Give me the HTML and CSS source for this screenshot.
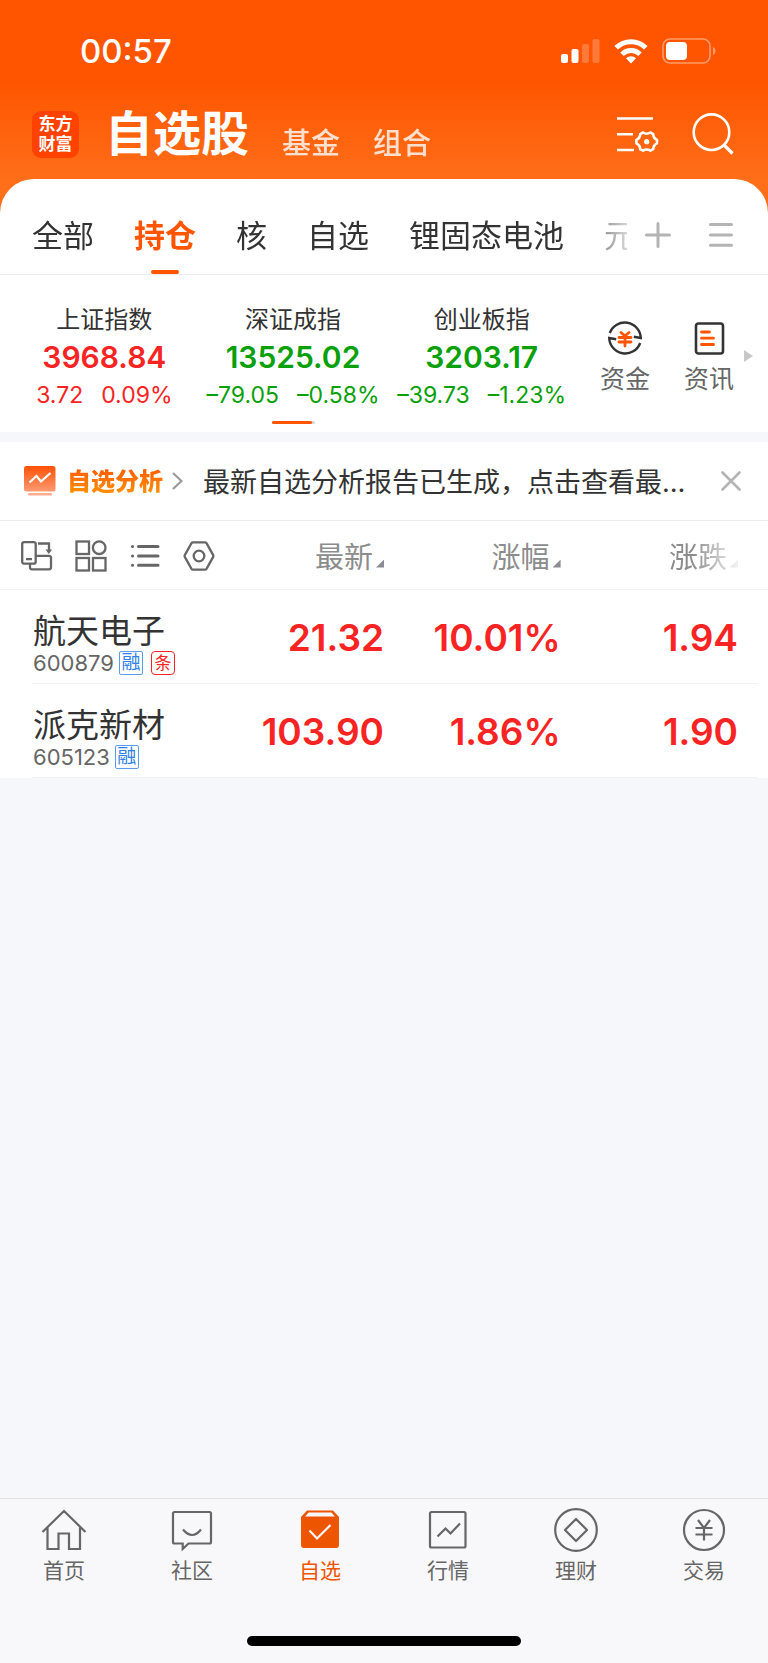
FILE: index.html
```html
<!DOCTYPE html>
<html lang="zh-CN">
<head>
<meta charset="utf-8">
<meta name="viewport" content="width=device-width, initial-scale=1">
<title>自选股</title>
<link rel="stylesheet" href="styles.css">
</head>
<body>
<div class="top">
  <div class="status">
    <time class="clock">00:57</time>
    <div class="status-icons">
      <svg width="39" height="24" viewBox="0 0 39 24" fill="#fff"><rect x="0" y="15" width="7" height="9" rx="2"/><rect x="10.500" y="10" width="7" height="14" rx="2"/><g opacity=".22"><rect x="21" y="5" width="7" height="19" rx="2"/><rect x="31.500" y="0" width="7" height="24" rx="2"/></g></svg>
      <svg width="34" height="25" viewBox="0 0 34 25" fill="none" stroke="#fff" stroke-width="5"><path d="M2.200 8.800a21 21 0 0 1 29.600 0"/><path d="M8 15.200a12.800 12.800 0 0 1 18 0"/><path d="M17 24.500l-5-5.200a7.200 7.200 0 0 1 10 0z" fill="#fff" stroke="none"/></svg>
      <svg width="54" height="26" viewBox="0 0 54 26"><rect x="1" y="1" width="47" height="24" rx="7" fill="none" stroke="#fff" stroke-opacity=".42" stroke-width="1.600"/><rect x="4" y="4" width="21" height="18" rx="4" fill="#fff"/><path d="M51 9v8c1.500-.7 2.500-2.200 2.500-4S52.500 9.700 51 9z" fill="#fff" fill-opacity=".42"/></svg>
    </div>
  </div>
  <header class="header">
    <div class="logo"><span>东方</span><span>财富</span></div>
    <nav class="sections">
      <h1 class="section-current">自选股</h1>
      <a class="section" href="#fund">基金</a>
      <a class="section" href="#combo">组合</a>
    </nav>
    <div class="header-actions">
      <button class="icon-button" aria-label="列表设置"><svg width="42" height="42" viewBox="0 0 42 42" fill="none" stroke="#fff" stroke-width="2.600"><path d="M0 5.500h36M0 21.200h16M0 37h17"/><path d="M26 19.500q3.700 2.400 7.400 0l2.800 1.600q.1 4 3.800 5.800v3.400q-3.700 1.800-3.800 5.800l-2.800 1.600q-3.700-2.400-7.400 0l-2.800-1.600q-.1-4-3.800-5.800v-3.400q3.700-1.800 3.800-5.800z" stroke-linejoin="round"/><circle cx="29.700" cy="28.700" r="2.600" fill="#fff" stroke="none"/></svg></button>
      <button class="icon-button" aria-label="搜索"><svg width="42" height="42" viewBox="0 0 42 42" fill="none" stroke="#fff" stroke-width="2.600"><circle cx="19.500" cy="19.200" r="17.800"/><path d="M31.500 31.500l9 9" stroke-width="3.200"/></svg></button>
    </div>
  </header>
  <div class="groups">
    <nav class="group-tabs">
      <a class="group" href="#all">全部</a>
      <a class="group group-active" href="#hold" aria-current="page">持仓</a>
      <a class="group" href="#core">核</a>
      <a class="group" href="#own">自选</a>
      <a class="group" href="#battery">锂固态电池</a>
      <a class="group" href="#meta">元</a>
    </nav>
    <div class="group-actions">
      <button class="icon-button" aria-label="添加分组"><svg width="26" height="26" viewBox="0 0 26 26" stroke="#b4b4b4" stroke-width="3" stroke-linecap="round"><path d="M13 1.500v23M1.500 13h23"/></svg></button>
      <button class="icon-button" aria-label="分组管理"><svg width="24" height="26" viewBox="0 0 24 26" stroke="#b4b4b4" stroke-width="3" stroke-linecap="round"><path d="M1.500 2.500h21M1.500 13h21M1.500 23.300h21"/></svg></button>
    </div>
  </div>
</div>

<section class="market">
  <div class="indices">
    <article class="index up">
      <h2 class="index-name">上证指数</h2>
      <p class="index-value">3968.84</p>
      <p class="index-change"><span>3.72</span><span>0.09%</span></p>
    </article>
    <article class="index down">
      <h2 class="index-name">深证成指</h2>
      <p class="index-value">13525.02</p>
      <p class="index-change"><span>–79.05</span><span>–0.58%</span></p>
    </article>
    <article class="index down">
      <h2 class="index-name">创业板指</h2>
      <p class="index-value">3203.17</p>
      <p class="index-change"><span>–39.73</span><span>–1.23%</span></p>
    </article>
    <div class="pager"><span></span></div>
  </div>
  <div class="shortcuts">
    <button class="shortcut"><svg width="36" height="36" viewBox="0 0 36 36" fill="none" stroke="#333" stroke-width="2.400"><path d="M2.800 13A16 16 0 0 1 33.800 18l-7-1.200"/><path d="M33.200 23A16 16 0 0 1 2.200 18l7 1.200"/><g stroke="#ff5500" stroke-width="2.800" stroke-linecap="round"><path d="M14 12.500l4 3.500 4-3.500M12 17.500h12M12 22h12M18 16.500v9.500"/></g></svg>资金</button>
    <button class="shortcut"><svg width="36" height="36" viewBox="0 0 36 36" fill="none" stroke="#333" stroke-width="2.600"><rect x="5" y="3.500" width="27" height="30" rx="2.500"/><path d="M10.500 12h8M10.500 18.200h12M10.500 24.500h12" stroke="#ff5500" stroke-width="2.800" stroke-linecap="round"/></svg>资讯</button>
    <svg class="more" width="9" height="12" viewBox="0 0 9 12" fill="#c8c8c8"><path d="M0 0l9 6-9 6z"/></svg>
  </div>
</section>

<section class="report">
  <a class="report-label" href="#analysis">
    <svg width="32" height="32" viewBox="0 0 32 32"><defs><linearGradient id="rg" x1="0" y1="0" x2="0" y2="1"><stop offset="0" stop-color="#ff5208"/><stop offset="1" stop-color="#ff9a72"/></linearGradient></defs><rect x="0" y="1" width="31.500" height="25.500" rx="2.500" fill="url(#rg)"/><rect x="4" y="28" width="24" height="2.600" rx="1" fill="#ffae8e"/><path d="M5.500 17.500l7-6.500 4.500 5.500 9.500-8.500" fill="none" stroke="#fff" stroke-width="2.200"/></svg>
    <strong>自选分析</strong>
    <svg width="11" height="18" viewBox="0 0 11 18" fill="none" stroke="#999" stroke-width="2.200"><path d="M1 1l8.500 8L1 17"/></svg>
  </a>
  <p class="report-text">最新自选分析报告已生成，点击查看最…</p>
  <button class="icon-button" aria-label="关闭"><svg width="20" height="20" viewBox="0 0 20 20" stroke="#b4b4b4" stroke-width="2.600" stroke-linecap="round"><path d="M1.500 1.500l17 17M18.500 1.500l-17 17"/></svg></button>
</section>

<main class="main">
  <table class="stocks">
    <colgroup><col class="col-name"><col class="col-price"><col class="col-rate"><col class="col-diff"></colgroup>
    <thead>
      <tr>
        <th scope="col">
          <div class="tools">
            <button class="icon-button" aria-label="横屏"><svg width="32" height="32" viewBox="0 0 32 32" fill="none" stroke="#666" stroke-width="2.300"><rect x="1.200" y="2.200" width="13.500" height="21.500" rx="2"/><path d="M5 19.200h6M15 15.800h13a2 2 0 0 1 2 2v9.500a2 2 0 0 1-2 2H11a2 2 0 0 1-2-2v-3.500M17 3.500h11v8"/><path d="M24.500 9.500h6.500l-3.200 4.500z" fill="#666" stroke="none"/></svg></button>
            <button class="icon-button" aria-label="宫格"><svg width="32" height="32" viewBox="0 0 32 32" fill="none" stroke="#666" stroke-width="2.300"><rect x="1.500" y="1.500" width="12.500" height="12.500"/><circle cx="24.200" cy="7.700" r="6.300"/><rect x="1.500" y="18" width="12.500" height="12.500"/><rect x="18" y="18" width="12.500" height="12.500"/></svg></button>
            <button class="icon-button" aria-label="列表"><svg width="32" height="32" viewBox="0 0 32 32" fill="none" stroke="#666" stroke-width="3" stroke-linecap="round"><path d="M9.500 6.500h19.500M9.500 16h19.500M9.500 25.300h19.500M3.500 6.500h.1M3.500 16h.1M3.500 25.300h.1"/></svg></button>
            <button class="icon-button" aria-label="设置"><svg width="32" height="32" viewBox="0 0 32 32" fill="none" stroke="#666" stroke-width="2.300"><path d="M10 2.400h12a1.800 1.800 0 0 1 1.500.8l6.700 11.900a2 2 0 0 1 0 1.800l-6.700 11.900a1.800 1.800 0 0 1-1.500.8H10a1.800 1.800 0 0 1-1.500-.8L1.800 16.900a2 2 0 0 1 0-1.800L8.500 3.200A1.800 1.800 0 0 1 10 2.400z"/><circle cx="16" cy="16" r="5.300"/></svg></button>
          </div>
        </th>
        <th scope="col"><button class="sort">最新</button></th>
        <th scope="col"><button class="sort">涨幅</button></th>
        <th scope="col"><button class="sort sort-faded">涨跌</button></th>
      </tr>
    </thead>
    <tbody>
      <tr>
        <td><div class="stock-name">航天电子</div><div class="stock-code">600879<span class="badge">融</span><span class="badge badge-red">条</span></div></td>
        <td>21.32</td><td>10.01%</td><td>1.94</td>
      </tr>
      <tr>
        <td><div class="stock-name">派克新材</div><div class="stock-code">605123<span class="badge">融</span></div></td>
        <td>103.90</td><td>1.86%</td><td>1.90</td>
      </tr>
    </tbody>
  </table>
</main>

<footer class="footer">
  <nav class="tabbar">
    <a class="tab" href="#home"><svg width="46" height="46" viewBox="0 0 46 46" fill="none" stroke="#666" stroke-width="2.200"><path d="M1.500 24L23 3l21.500 21M6.500 19.500V41h11V25.500h10.500V41h11V19.500"/></svg>首页</a>
    <a class="tab" href="#community"><svg width="46" height="46" viewBox="0 0 46 46" fill="none" stroke="#666" stroke-width="2.200"><path d="M5.500 4h35a1.500 1.500 0 0 1 1.500 1.500V34a1.500 1.500 0 0 1-1.500 1.500H19.500L13.700 41v-5.500H5.500A1.500 1.500 0 0 1 4 34V5.500A1.500 1.500 0 0 1 5.500 4z"/><path d="M14 21.500q9.200 11 18 0"/></svg>社区</a>
    <a class="tab tab-active" href="#watch" aria-current="page"><svg width="46" height="46" viewBox="0 0 46 46"><path d="M10 2.500h26L42 9v28a3 3 0 0 1-3 3H7a3 3 0 0 1-3-3V9z" fill="#ee5500"/><path d="M11.500 4.600h23l3.300 4H8.200z" fill="#f8f8fb"/><path d="M12.500 22.500l7.500 8L33.500 17" fill="none" stroke="#f8f8fb" stroke-width="2.200"/></svg>自选</a>
    <a class="tab" href="#quotes"><svg width="46" height="46" viewBox="0 0 46 46" fill="none" stroke="#666" stroke-width="2.200"><rect x="5" y="4" width="35.500" height="35.500" rx="1.500"/><path d="M12.500 28.500l8-8 5 5L35 15.500"/></svg>行情</a>
    <a class="tab" href="#wealth"><svg width="46" height="46" viewBox="0 0 46 46" fill="none" stroke="#666" stroke-width="2.200" stroke-linejoin="round"><circle cx="23" cy="22" r="20.800"/><path d="M23 11l11 11-11 11-11-11z"/></svg>理财</a>
    <a class="tab" href="#trade"><svg width="46" height="46" viewBox="0 0 46 46" fill="none" stroke="#666" stroke-width="2.200"><circle cx="23" cy="22" r="20"/><path d="M17 12l6 8 6-8M14.500 20h17M14.500 26.500h17M23 20v12.500"/></svg>交易</a>
  </nav>
  <div class="home-indicator"></div>
</footer>
</body>
</html>
```
FILE: styles.css
```css
* { box-sizing: border-box; }

body {
  margin: 0;
  min-height: 100vh;
  display: flex;
  flex-direction: column;
  background: #f6f7fa;
  color: #333;
  font-family: Inter, "Noto Sans CJK SC", sans-serif;
  font-weight: 400;
}

h1, h2, p { margin: 0; font-weight: inherit; }
a { color: inherit; text-decoration: none; }
svg { display: block; flex: none; }

button {
  margin: 0;
  padding: 0;
  border: 0;
  background: none;
  color: inherit;
  font: inherit;
  cursor: pointer;
}

/* Orange area */
.top { background: linear-gradient(#ff5500 80px, #ff6e19 180px); }

.status {
  display: flex;
  align-items: center;
  justify-content: space-between;
  height: 96px;
  padding: 6px 52px 0 80px;
  color: #fff;
}
.clock { font-size: 33px; line-height: 40px; font-weight: 500; }
.status-icons { display: flex; align-items: center; gap: 14px; }

.header {
  display: flex;
  align-items: center;
  height: 83px;
  padding: 0 34px 7px 32px;
  color: #fff;
}
.logo {
  display: grid;
  align-content: center;
  justify-items: center;
  width: 47px;
  height: 47px;
  border-radius: 9px;
  background: #ff4200;
  font-size: 17px;
  line-height: 20px;
  font-weight: 700;
}
.sections {
  display: flex;
  align-items: flex-end;
  gap: 33px;
  flex: 1;
  margin-left: 26px;
}
.section-current { font-size: 48px; line-height: 56px; font-weight: 700; }
.section { font-size: 29px; line-height: 36px; font-weight: 500; opacity: .8; }
.header-actions { display: flex; gap: 33px; }

/* Group tabs */
.groups {
  display: flex;
  align-items: stretch;
  height: 96px;
  padding: 17px 35px 0 0;
  border-bottom: 1px solid #ebebed;
  border-radius: 34px 34px 0 0;
  background: #fff;
}
.group-tabs {
  display: flex;
  gap: 40px;
  flex: 1;
  min-width: 0;
  padding-left: 32px;
  overflow: hidden;
  -webkit-mask-image: linear-gradient(to left, rgba(0, 0, 0, .2), #000 60px);
  mask-image: linear-gradient(to left, rgba(0, 0, 0, .2), #000 60px);
}
.group {
  position: relative;
  flex: none;
  font-size: 31px;
  line-height: 80px;
}
.group-active { color: #ff5500; font-weight: 700; }
.group-active::after {
  content: "";
  position: absolute;
  left: 50%;
  bottom: 0;
  width: 28px;
  height: 4px;
  margin-left: -14px;
  border-radius: 2px;
  background: #ff5500;
}
.group-actions { display: flex; align-items: center; gap: 38px; margin-left: 18px; }

/* Market indices */
.market {
  display: flex;
  padding-right: 15px;
  border-bottom: 10px solid #f6f7fa;
  background: #fff;
}
.indices {
  display: grid;
  grid-template-columns: repeat(3, 1fr);
  flex: 1;
  padding: 29px 14px 8px 10px;
}
.index { text-align: center; white-space: nowrap; }
.index-name { color: #333; font-size: 24px; line-height: 32px; }
.index-value { font-size: 30px; line-height: 43px; font-weight: 600; }
.index-change {
  display: flex;
  justify-content: center;
  gap: 18px;
  font-size: 23px;
  line-height: 32px;
}
.up { color: #f82424; }
.down { color: #0aa00a; }
.pager {
  grid-column: 1 / -1;
  justify-self: center;
  width: 43px;
  height: 3px;
  margin-top: 10px;
  border-radius: 2px;
  background: #d8d8dc;
}
.pager span {
  display: block;
  width: 40px;
  height: 3px;
  border-radius: 2px;
  background: #ff5500;
}
.shortcuts { display: flex; align-items: flex-start; padding-top: 45px; }
.shortcut {
  display: flex;
  flex-direction: column;
  align-items: center;
  gap: 7px;
  width: 70px;
  color: #666;
  font-size: 25px;
  line-height: 32px;
}
.shortcut + .shortcut { margin-left: 14px; }
.more { margin-top: 30px; }

/* Report banner */
.report {
  display: flex;
  align-items: center;
  height: 79px;
  padding: 0 27px 0 24px;
  border-bottom: 1px solid #ebebed;
  background: #fff;
}
.report-label { display: flex; align-items: center; }
.report-label strong {
  margin: 0 9px 0 11px;
  padding-top: 2px;
  background: linear-gradient(#ff5200, #ff9a00);
  -webkit-background-clip: text;
  background-clip: text;
  color: transparent;
  font-size: 24px;
  line-height: 32px;
  font-weight: 900;
}
.report-text {
  flex: 1;
  min-width: 0;
  margin: 0 20px;
  padding-top: 4px;
  overflow: hidden;
  white-space: nowrap;
  text-overflow: ellipsis;
  font-size: 27px;
  line-height: 40px;
}

/* Stock table */
.main { flex: 1; }
.stocks {
  width: 100%;
  border-collapse: collapse;
  table-layout: fixed;
  background: #fff;
}
.col-name { width: 30%; }
.col-price { width: 20%; }
.col-rate { width: 23%; }
.col-diff { width: 27%; }
.stocks th, .stocks td { padding: 0; text-align: right; }
.stocks th:last-child, .stocks td:last-child { padding-right: 30px; }
.stocks thead tr {
  height: 69px;
  background: linear-gradient(#f2f2f4, #f2f2f4) left bottom / 100% 1px no-repeat;
}
.tools { display: flex; gap: 22px; padding-left: 21px; }
.sort {
  display: inline-flex;
  align-items: baseline;
  gap: 3px;
  padding-top: 4px;
  color: #8c8c8c;
  font-size: 29px;
  line-height: 40px;
  font-weight: 400;
}
.sort::after {
  content: "";
  width: 8px;
  height: 8px;
  background: #8c8c96;
  clip-path: polygon(100% 0, 100% 100%, 0 100%);
}
.sort-faded {
  -webkit-mask-image: linear-gradient(to left, rgba(0, 0, 0, .1), #000 45px);
  mask-image: linear-gradient(to left, rgba(0, 0, 0, .1), #000 45px);
}
.stocks tbody tr {
  height: 94px;
  background: linear-gradient(#f2f2f4, #f2f2f4) left 32px bottom / calc(100% - 42px) 1px no-repeat;
}
.stocks tbody td {
  padding-top: 2px;
  color: #f82424;
  font-size: 37px;
  line-height: 44px;
  font-weight: 600;
}
.stocks tbody td:first-child {
  padding: 14px 0 0 33px;
  text-align: left;
  color: #333;
  font-weight: 400;
}
.stock-name { font-size: 33px; line-height: 37px; }
.stock-code {
  display: flex;
  align-items: center;
  color: #666;
  font-size: 22px;
  line-height: 26px;
}
.badge {
  width: 24px;
  height: 24px;
  margin-left: 5px;
  border: 1px solid #5a9df0;
  border-radius: 2px;
  color: #2f80e8;
  font-size: 19px;
  line-height: 22px;
  text-align: center;
}
.badge-red {
  margin-left: 8px;
  border-color: #f82424;
  border-radius: 4px;
  color: #f82424;
  font-size: 17px;
}

/* Bottom bar */
.footer {
  padding-bottom: 17px;
  border-top: 1px solid #e2e2e4;
  background: #f8f8fb;
}
.tabbar { display: grid; grid-template-columns: repeat(6, 1fr); }
.tab {
  display: flex;
  flex-direction: column;
  align-items: center;
  padding-top: 9px;
  color: #666;
  font-size: 21px;
  line-height: 34px;
}
.tab-active { color: #ee5500; }
.home-indicator {
  width: 274px;
  height: 10px;
  margin: 48px auto 0;
  border-radius: 5px;
  background: #000;
}
```
